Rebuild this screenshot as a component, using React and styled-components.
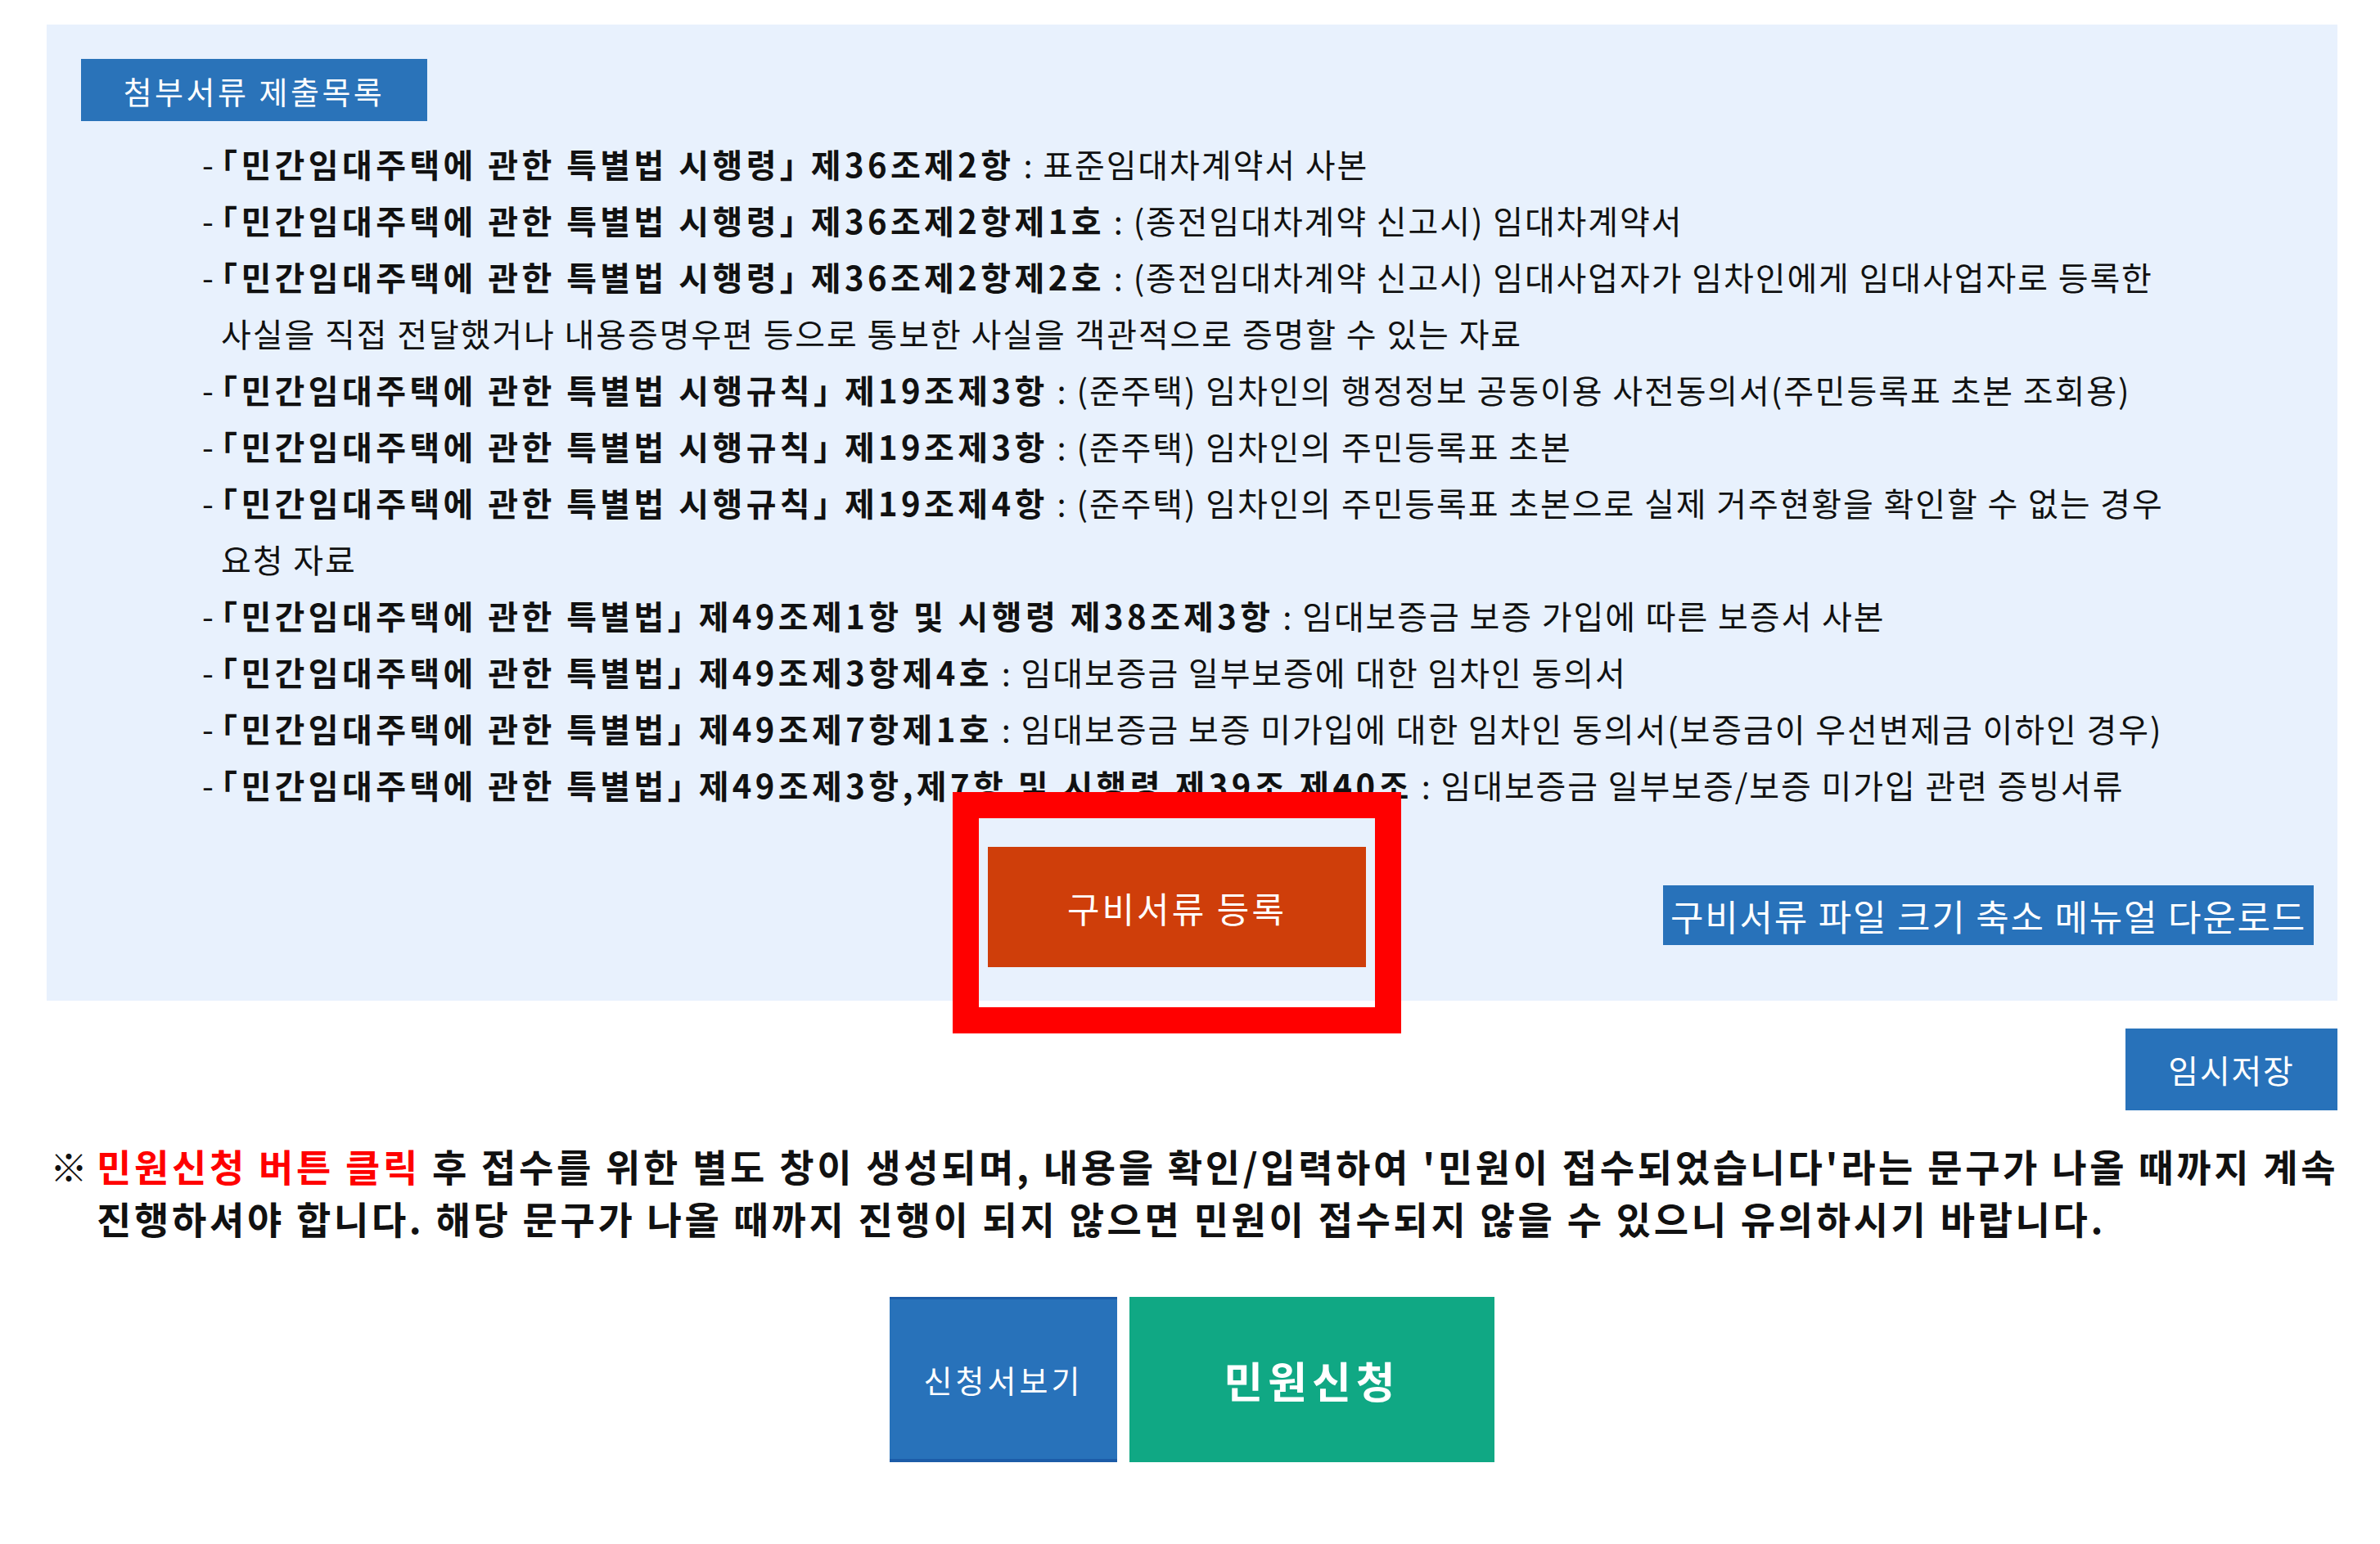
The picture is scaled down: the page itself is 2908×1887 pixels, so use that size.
import styled, { createGlobalStyle } from "styled-components"

const GlobalStyle = createGlobalStyle`
    body {
        margin: 0;
        background: #ffffff;
        font-family: "Noto Sans CJK KR", "Noto Sans", sans-serif;
        color: #111111;
    }
`

const Page = styled.div`
    width: 2799px;
    margin-left: 57px;
    padding-top: 30px;
`

const Panel = styled.section`
    display: flex;
    flex-direction: column;
    padding: 42px 29px 41px 42px;
    background-color: #e8f1fd;
`

const Label = styled.div`
    display: flex;
    justify-content: center;
    align-items: center;
    width: 423px;
    height: 76px;
    background-color: #2a73b9;
    color: #ffffff;
    font-size: 38px;
    letter-spacing: 3.5px;
`

const List = styled.ul`
    list-style: none;
    margin: 18px 0 0 0;
    padding: 0 0 0 148px;
    font-size: 40px;
    line-height: 69px;
    letter-spacing: 1.9px;
    white-space: nowrap;
    font-feature-settings: "halt";
`

const Item = styled.li`
    display: flex;
    .dash {
        width: 23px;
        flex: none;
    }
    b {
        font-weight: 700;
        letter-spacing: 4.4px;
    }
`

const BottomRow = styled.div`
    display: grid;
    grid-template-columns: 1108px 462px 1fr;
    margin-top: 41px;
`

const HighlightWrap = styled.div`
    position: relative;
    grid-column: 2;
`

const Highlight = styled.div`
    position: absolute;
    left: -43px;
    top: -67px;
    right: -43px;
    bottom: -81px;
    border: 32px solid #ff0000;
    pointer-events: none;
`

const Button = styled.button`
    display: flex;
    justify-content: center;
    align-items: center;
    border: none;
    padding: 0;
    margin: 0;
    width: ${props => props.$w}px;
    height: ${props => props.$h}px;
    background-color: ${props => props.$bg || "#2872ba"};
    color: #ffffff;
    font-family: "Noto Sans CJK KR", "Noto Sans", sans-serif;
    font-size: ${props => props.$size}px;
    font-weight: ${props => props.$bold ? 700 : 400};
    letter-spacing: ${props => props.$ls || 0}px;
    white-space: nowrap;
`

const EdgeButton = styled(Button)`
    border-top: 3px solid #1c5ca8;
    border-bottom: 4px solid #1c5ca8;
`

const DownloadButton = styled(Button)`
    grid-column: 3;
    justify-self: end;
    align-self: end;
    margin-bottom: 27px;
`

const SaveRow = styled.div`
    display: flex;
    justify-content: flex-end;
    margin-top: 34px;
`

const Notice = styled.p`
    display: flex;
    margin: 35px 0 0 4px;
    font-size: 46px;
    line-height: 64px;
    font-weight: 700;
    letter-spacing: 3.65px;
    color: #111111;
    white-space: nowrap;
    .mark {
        width: 57px;
        flex: none;
    }
    em {
        font-style: normal;
        color: #ff0000;
    }
`

const Actions = styled.div`
    display: flex;
    justify-content: center;
    gap: 15px;
    margin-top: 65px;
`

const items = [
    { law: "「민간임대주택에 관한 특별법 시행령」 제36조제2항", text: " : 표준임대차계약서 사본" },
    { law: "「민간임대주택에 관한 특별법 시행령」 제36조제2항제1호", text: " : (종전임대차계약 신고시) 임대차계약서" },
    {
        law: "「민간임대주택에 관한 특별법 시행령」 제36조제2항제2호",
        text: " : (종전임대차계약 신고시) 임대사업자가 임차인에게 임대사업자로 등록한",
        more: "사실을 직접 전달했거나 내용증명우편 등으로 통보한 사실을 객관적으로 증명할 수 있는 자료",
    },
    { law: "「민간임대주택에 관한 특별법 시행규칙」 제19조제3항", text: " : (준주택) 임차인의 행정정보 공동이용 사전동의서(주민등록표 초본 조회용)" },
    { law: "「민간임대주택에 관한 특별법 시행규칙」 제19조제3항", text: " : (준주택) 임차인의 주민등록표 초본" },
    {
        law: "「민간임대주택에 관한 특별법 시행규칙」 제19조제4항",
        text: " : (준주택) 임차인의 주민등록표 초본으로 실제 거주현황을 확인할 수 없는 경우",
        more: "요청 자료",
    },
    { law: "「민간임대주택에 관한 특별법」 제49조제1항 및 시행령 제38조제3항", text: " : 임대보증금 보증 가입에 따른 보증서 사본" },
    { law: "「민간임대주택에 관한 특별법」 제49조제3항제4호", text: " : 임대보증금 일부보증에 대한 임차인 동의서" },
    { law: "「민간임대주택에 관한 특별법」 제49조제7항제1호", text: " : 임대보증금 보증 미가입에 대한 임차인 동의서(보증금이 우선변제금 이하인 경우)" },
    { law: "「민간임대주택에 관한 특별법」 제49조제3항,제7항 및 시행령 제39조 제40조", text: " : 임대보증금 일부보증/보증 미가입 관련 증빙서류" },
]

export default function App() {
    return (
        <>
            <GlobalStyle />
            <Page>
                <Panel>
                    <Label>첨부서류 제출목록</Label>
                    <List>
                        {items.map((item, i) => (
                            <Item key={i}>
                                <span className="dash">-</span>
                                <span>
                                    <b>{item.law}</b>{item.text}
                                    {item.more && <><br />{item.more}</>}
                                </span>
                            </Item>
                        ))}
                    </List>
                    <BottomRow>
                        <HighlightWrap>
                            <Button $w={462} $h={147} $size={43} $ls={3} $bg="#cf3e0a">구비서류 등록</Button>
                            <Highlight />
                        </HighlightWrap>
                        <DownloadButton $w={795} $h={73} $size={44} $ls={1.8}>구비서류 파일 크기 축소 메뉴얼 다운로드</DownloadButton>
                    </BottomRow>
                </Panel>
                <SaveRow>
                    <Button $w={259} $h={100} $size={40} $ls={1.8}>임시저장</Button>
                </SaveRow>
                <Notice>
                    <span className="mark">※</span>
                    <span>
                        <em>민원신청 버튼 클릭</em> 후 접수를 위한 별도 창이 생성되며, 내용을 확인/입력하여 '민원이 접수되었습니다'라는 문구가 나올 때까지 계속
                        <br />
                        진행하셔야 합니다. 해당 문구가 나올 때까지 진행이 되지 않으면 민원이 접수되지 않을 수 있으니 유의하시기 바랍니다.
                    </span>
                </Notice>
                <Actions>
                    <EdgeButton $w={278} $h={202} $size={38} $ls={4}>신청서보기</EdgeButton>
                    <Button $w={446} $h={202} $size={52} $ls={6} $bold $bg="#10a884">민원신청</Button>
                </Actions>
            </Page>
        </>
    )
}
